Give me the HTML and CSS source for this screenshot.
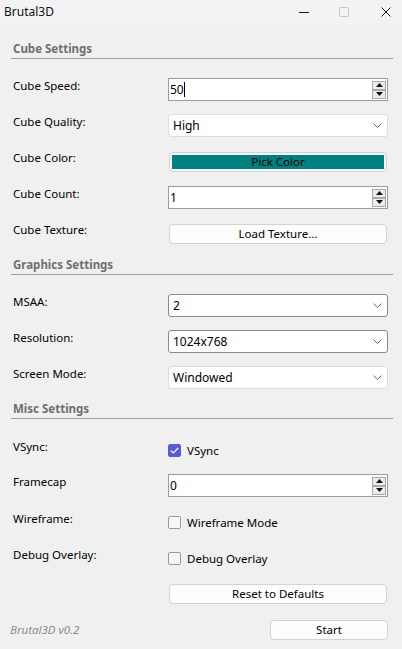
FILE: index.html
```html
<!DOCTYPE html>
<html>
<head>
<meta charset="utf-8">
<link rel="stylesheet" href="styles.css">
</head>
<body>
<div class="window">
  <div class="titlebar">
    <span class="title">Brutal3D</span>
    <div class="caption">
      <svg class="cap-min" width="10" height="10" viewBox="0 0 10 10"><path d="M0 5.5H10" stroke="#1a1a1a" stroke-width="1"/></svg>
      <svg class="cap-max" width="10" height="10" viewBox="0 0 10 10"><rect x="0.5" y="0.5" width="9" height="9" rx="1" fill="none" stroke="#c4c4c4" stroke-width="1"/></svg>
      <svg class="cap-close" width="10" height="10" viewBox="0 0 10 10"><path d="M0.5 0.5L9.5 9.5M9.5 0.5L0.5 9.5" stroke="#1a1a1a" stroke-width="1"/></svg>
    </div>
  </div>

  <div class="content">
    <section class="group first">
      <div class="group-title">Cube Settings</div>
      <div class="form">
        <div class="lbl">Cube Speed:</div>
        <div class="spin focus">
          <span class="spin-text">50<span class="caret"></span></span>
          <span class="spin-btns">
            <span class="sb"><svg width="7" height="4" viewBox="0 0 7 4"><path d="M3.5 0L7 4H0z" fill="#111"/></svg></span>
            <span class="sb"><svg width="7" height="4" viewBox="0 0 7 4"><path d="M0 0H7L3.5 4z" fill="#111"/></svg></span>
          </span>
        </div>

        <div class="lbl">Cube Quality:</div>
        <div class="combo">
          <span class="combo-text">High</span>
          <svg class="chev" width="9" height="5" viewBox="0 0 9 5"><path d="M0.5 0.5L4.5 4.5L8.5 0.5" fill="none" stroke="#6a6a6a" stroke-width="1"/></svg>
        </div>

        <div class="lbl">Cube Color:</div>
        <div class="btn color-btn"><span class="swatch">Pick Color</span></div>

        <div class="lbl">Cube Count:</div>
        <div class="spin">
          <span class="spin-text">1</span>
          <span class="spin-btns">
            <span class="sb"><svg width="7" height="4" viewBox="0 0 7 4"><path d="M3.5 0L7 4H0z" fill="#111"/></svg></span>
            <span class="sb"><svg width="7" height="4" viewBox="0 0 7 4"><path d="M0 0H7L3.5 4z" fill="#111"/></svg></span>
          </span>
        </div>

        <div class="lbl">Cube Texture:</div>
        <div class="btn">Load Texture...</div>
      </div>
    </section>

    <section class="group">
      <div class="group-title">Graphics Settings</div>
      <div class="form">
        <div class="lbl">MSAA:</div>
        <div class="combo dark">
          <span class="combo-text">2</span>
          <svg class="chev" width="9" height="5" viewBox="0 0 9 5"><path d="M0.5 0.5L4.5 4.5L8.5 0.5" fill="none" stroke="#6a6a6a" stroke-width="1"/></svg>
        </div>

        <div class="lbl">Resolution:</div>
        <div class="combo dark">
          <span class="combo-text">1024x768</span>
          <svg class="chev" width="9" height="5" viewBox="0 0 9 5"><path d="M0.5 0.5L4.5 4.5L8.5 0.5" fill="none" stroke="#6a6a6a" stroke-width="1"/></svg>
        </div>

        <div class="lbl">Screen Mode:</div>
        <div class="combo">
          <span class="combo-text">Windowed</span>
          <svg class="chev" width="9" height="5" viewBox="0 0 9 5"><path d="M0.5 0.5L4.5 4.5L8.5 0.5" fill="none" stroke="#6a6a6a" stroke-width="1"/></svg>
        </div>
      </div>
    </section>

    <section class="group">
      <div class="group-title">Misc Settings</div>
      <div class="form">
        <div class="lbl lbl-cb">VSync:</div>
        <div class="check">
          <span class="box checked"><svg width="9" height="7" viewBox="0 0 9 7"><path d="M0.8 3.6L3.3 6L8.2 1" fill="none" stroke="#fff" stroke-width="1.2"/></svg></span>
          <span>VSync</span>
        </div>

        <div class="lbl">Framecap</div>
        <div class="spin">
          <span class="spin-text">0</span>
          <span class="spin-btns">
            <span class="sb"><svg width="7" height="4" viewBox="0 0 7 4"><path d="M3.5 0L7 4H0z" fill="#111"/></svg></span>
            <span class="sb"><svg width="7" height="4" viewBox="0 0 7 4"><path d="M0 0H7L3.5 4z" fill="#111"/></svg></span>
          </span>
        </div>

        <div class="lbl lbl-cb">Wireframe:</div>
        <div class="check">
          <span class="box"></span>
          <span>Wireframe Mode</span>
        </div>

        <div class="lbl lbl-cb">Debug Overlay:</div>
        <div class="check">
          <span class="box"></span>
          <span>Debug Overlay</span>
        </div>

        <div class="spacer"></div>
        <div class="btn">Reset to Defaults</div>
      </div>
    </section>

    <div class="footer">
      <span class="version">Brutal3D v0.2</span>
      <div class="btn start">Start</div>
    </div>
  </div>
</div>
</body>
</html>
```

FILE: styles.css
```css
* { box-sizing: border-box; }

html, body {
  margin: 0;
  padding: 0;
}

body {
  background: #f0f0f0;
  font-family: "Noto Sans", "Open Sans", sans-serif;
  font-size: 11.5px;
  color: #000;
  width: 402px;
  height: 649px;
  overflow: hidden;
}

.titlebar {
  height: 24px;
  background: #f3f3f5;
  display: flex;
  align-items: center;
  justify-content: space-between;
  padding-left: 4px;
}

.title {
  font-size: 12px;
  color: #111;
  line-height: 16px;
}

.caption {
  display: flex;
  align-items: center;
  padding-right: 11px;
}

.caption svg { display: block; }
.cap-min { margin-right: 30px; }
.cap-max { margin-right: 32px; }

.group-title {
  margin-left: 11px;
  width: 382px;
  padding-left: 2px;
  font-weight: bold;
  color: #6f6f6f;
  line-height: 16px;
  padding-bottom: 1px;
  border-bottom: 1px solid #a0a0a0;
  margin-top: 12px;
}

.group.first .group-title { margin-top: 17px; }

.form {
  display: grid;
  grid-template-columns: 155px 220px;
  grid-auto-rows: 23px;
  row-gap: 13px;
  margin-left: 13px;
  margin-top: 19px;
}

.group.first .form { margin-top: 19px; }

.lbl {
  line-height: 16px;
  align-self: start;
  white-space: nowrap;
}

.lbl-cb { padding-top: 1px; }

.spin {
  display: flex;
  align-items: stretch;
  background: #fff;
  border: 1px solid #9c9c9c;
}

.spin-text {
  flex: 1;
  display: flex;
  align-items: center;
  padding-left: 1px;
  line-height: 16px;
  font-size: 12px;
}

.caret {
  display: inline-block;
  width: 1px;
  height: 15px;
  background: #000;
}

.spin-btns {
  display: flex;
  flex-direction: column;
  justify-content: center;
  margin-right: 1px;
}

.sb {
  width: 14px;
  height: 9px;
  border: 1px solid #a9a9a9;
  background: #ececec;
  display: flex;
  align-items: center;
  justify-content: center;
}

.sb svg { display: block; }

.combo {
  display: flex;
  align-items: center;
  justify-content: space-between;
  background: #fff;
  border: 1px solid #dcdcdc;
  border-radius: 3px;
  padding-left: 4px;
  padding-right: 5px;
  font-size: 12px;
}

.combo.dark { border-color: #8a8a8a; }

.chev { display: block; }

.btn {
  align-self: center;
  height: 20px;
  margin: 0 1px;
  background: #fdfdfd;
  border: 1px solid #d3d3d3;
  border-radius: 4px;
  display: flex;
  align-items: center;
  justify-content: center;
  line-height: 16px;
  color: #000;
}

.color-btn {
  padding: 2px;
  background: #f4f4f4;
}

.swatch {
  flex: 1;
  align-self: stretch;
  background: #008080;
  display: flex;
  align-items: center;
  justify-content: center;
  color: #000;
}

.check {
  display: flex;
  align-items: center;
  gap: 6px;
  padding-top: 2px;
}

.box {
  width: 13px;
  height: 13px;
  border: 1px solid #9a9a9a;
  border-radius: 2px;
  background: #f7f7f7;
  display: flex;
  align-items: center;
  justify-content: center;
}

.box.checked {
  background: #5a5ad6;
  border-color: #5a5ad6;
}

.box svg { display: block; }

.footer {
  display: flex;
  align-items: center;
  justify-content: space-between;
  height: 23px;
  margin-top: 13px;
  padding-left: 10px;
  padding-right: 14px;
}

.version {
  font-style: italic;
  color: #8c8c8c;
}

.btn.start {
  width: 118px;
  margin: 0;
}
```
